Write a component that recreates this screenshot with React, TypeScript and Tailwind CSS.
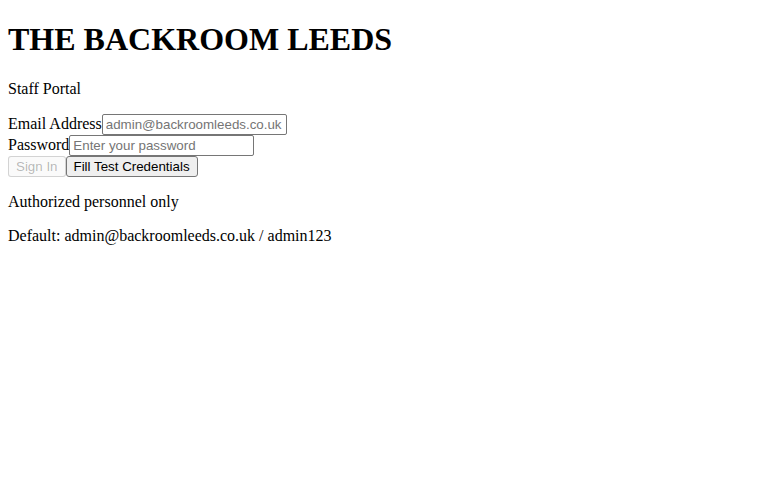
import { useState } from "react";

export default function App() {
  const [email, setEmail] = useState("");
  const [password, setPassword] = useState("");

  const fillTest = () => {
    setEmail("admin@backroomleeds.co.uk");
    setPassword("admin123");
  };

  const inputCls =
    "w-[185px] h-[21px] border border-[#767676] rounded-[2px] px-[3px] bg-white text-[13.33px] text-black placeholder:text-[#757575] align-baseline [font-family:'Liberation_Sans',Arial,sans-serif] outline-none";

  const buttonCls =
    "h-[21px] px-[7px] rounded-[3px] border text-[13.33px] [font-family:'Liberation_Sans',Arial,sans-serif] bg-[#efefef] border-[#767676] text-black";

  return (
    <div className="mx-2 text-black text-[16px] leading-[normal] [font-family:'Liberation_Serif','Times_New_Roman',serif]">
      <h1 className="mt-[21.44px] mb-[21.44px] text-[32px] font-bold">THE BACKROOM LEEDS</h1>
      <p className="my-4">Staff Portal</p>
      <form onSubmit={(e) => e.preventDefault()}>
        <div>
          <label htmlFor="email">Email Address</label>
          <input
            id="email"
            type="email"
            className={inputCls}
            placeholder="admin@backroomleeds.co.uk"
            value={email}
            onChange={(e) => setEmail(e.target.value)}
          />
        </div>
        <div>
          <label htmlFor="password">Password</label>
          <input
            id="password"
            type="password"
            className={inputCls}
            placeholder="Enter your password"
            value={password}
            onChange={(e) => setPassword(e.target.value)}
          />
        </div>
        <div>
          <button
            type="submit"
            disabled={!email || !password}
            className={
              buttonCls +
              " disabled:bg-[rgba(239,239,239,0.3)] disabled:border-[rgba(118,118,118,0.3)] disabled:text-[rgba(16,16,16,0.3)]"
            }
          >
            Sign In
          </button>
          <button type="button" onClick={fillTest} className={buttonCls}>
            Fill Test Credentials
          </button>
        </div>
      </form>
      <p className="my-4">Authorized personnel only</p>
      <p className="my-4">Default: admin@backroomleeds.co.uk / admin123</p>
    </div>
  );
}
